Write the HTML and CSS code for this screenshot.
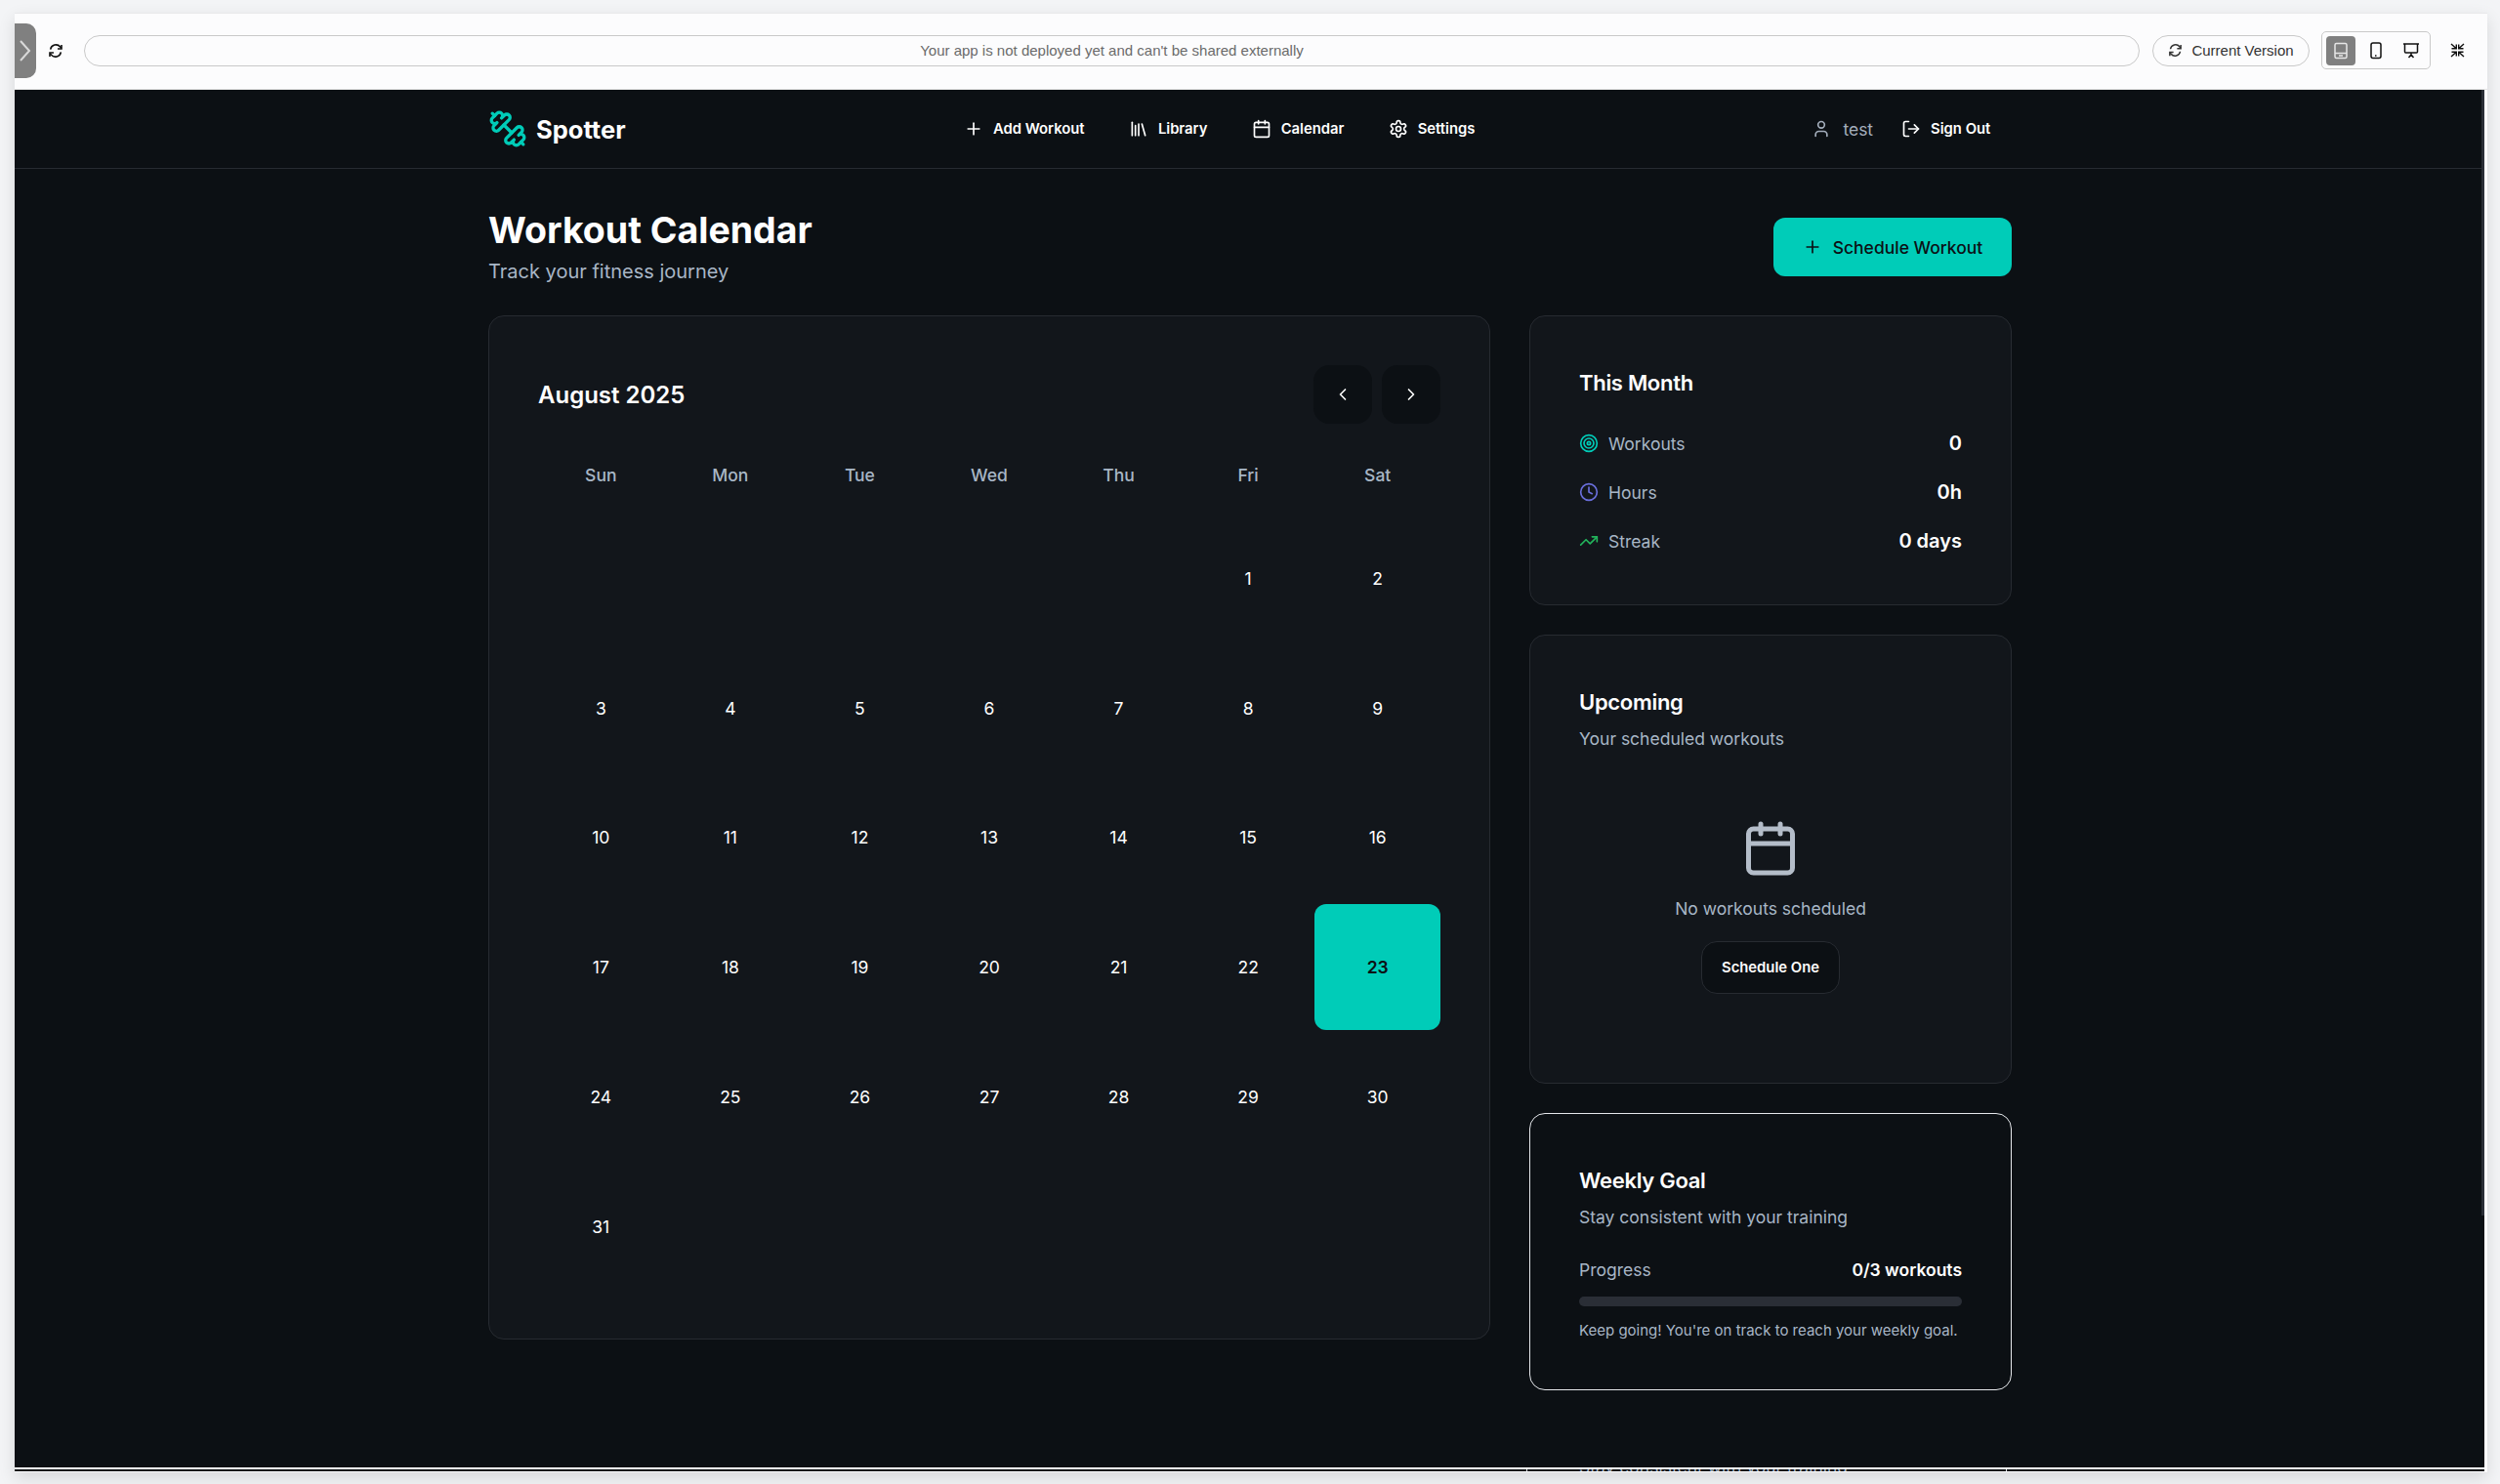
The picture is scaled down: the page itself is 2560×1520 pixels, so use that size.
FILE: index.html
```html
<!DOCTYPE html>
<html lang="en">
<head>
<meta charset="utf-8">
<title>Spotter</title>
<link rel="stylesheet" href="styles.css">
</head>
<body>
<div class="frame">
  <div class="toolbar">
    <div class="handle"><svg width="14" height="26" viewBox="0 0 14 26" fill="none" stroke="#d9d9d9" stroke-width="2"><path d="M2 3l9 10-9 10"/></svg></div>
    <svg class="refresh" width="16" height="18" viewBox="0 0 24 24" fill="none" stroke="#111" stroke-width="2.4"><path d="M4 10a8.500 8.500 0 0 1 15-4l1.500 2"/><path d="M21 3v6h-6"/><path d="M20 14a8.500 8.500 0 0 1-15 4l-1.500-2"/><path d="M3 21v-6h6"/></svg>
    <div class="url">Your app is not deployed yet and can't be shared externally</div>
    <div class="version"><svg width="15" height="15" viewBox="0 0 24 24" fill="none" stroke="#333" stroke-width="2.400"><path d="M4 10a8.500 8.500 0 0 1 15-4l1.500 2"/><path d="M21 3v6h-6"/><path d="M20 14a8.500 8.500 0 0 1-15 4l-1.500-2"/><path d="M3 21v-6h6"/></svg><span>Current Version</span></div>
    <div class="devices">
      <div class="device active"><svg width="18" height="18" viewBox="0 0 18 18" fill="none" stroke="#e6e6e6" stroke-width="1.500"><rect x="3" y="1.500" width="12" height="15" rx="1.500"/><path d="M3 11.500h12M7 14h4"/></svg></div>
      <div class="device"><svg width="16" height="18" viewBox="0 0 16 18" fill="none" stroke="#111" stroke-width="1.500"><rect x="3" y="1" width="10" height="15.500" rx="2"/><path d="M7 14h1.500"/></svg></div>
      <div class="device"><svg width="18" height="18" viewBox="0 0 18 18" fill="none" stroke="#111" stroke-width="1.500"><path d="M1 2h16M2.500 2v8a1 1 0 0 0 1 1h11a1 1 0 0 0 1-1V2M9 11v2M6.500 16L9 13l2.500 3"/></svg></div>
    </div>
    <svg class="shrink" width="15" height="15" viewBox="0 0 15 15" fill="none" stroke="#111" stroke-width="1.400"><path d="M1 1l5 4.500M1.500 5.800h4.800V1.500M14 1L9 5.500M13.500 5.800H8.700V1.500M1 14l5-4.500M1.500 9.200h4.800v4.300M14 14L9 9.500M13.500 9.200H8.700v4.300"/></svg>
  </div>
  <div class="app">
    <div class="scroll-thumb"></div>
    <header class="topbar">
      <div class="topbar-inner">
        <div class="brand">
          <svg class="logo" width="40" height="40" viewBox="0 0 24 24" fill="none" stroke="#00ccb8" stroke-width="2" stroke-linecap="round" stroke-linejoin="round"><path d="M14.400 14.400 9.600 9.600"/><path d="M18.657 21.485a2 2 0 1 1-2.829-2.828l-1.767 1.768a2 2 0 1 1-2.829-2.829l6.364-6.364a2 2 0 1 1 2.829 2.829l-1.768 1.767a2 2 0 1 1 2.828 2.829z"/><path d="m21.500 21.500-1.400-1.400"/><path d="M3.900 3.900 2.500 2.500"/><path d="M6.404 12.768a2 2 0 1 1-2.829-2.829l1.768-1.767a2 2 0 1 1-2.828-2.829l2.828-2.828a2 2 0 1 1 2.829 2.828l1.767-1.768a2 2 0 1 1 2.829 2.829z"/></svg>
          <span>Spotter</span>
        </div>
        <nav class="nav">
          <a class="nav-item"><svg class="i" viewBox="0 0 24 24"><path d="M5 12h14"/><path d="M12 5v14"/></svg>Add Workout</a>
          <a class="nav-item"><svg class="i" viewBox="0 0 24 24"><path d="m16 6 4 14"/><path d="M12 6v14"/><path d="M8 8v12"/><path d="M4 4v16"/></svg>Library</a>
          <a class="nav-item"><svg class="i" viewBox="0 0 24 24"><path d="M8 2v4"/><path d="M16 2v4"/><rect x="3" y="4" width="18" height="18" rx="2"/><path d="M3 10h18"/></svg>Calendar</a>
          <a class="nav-item"><svg class="i" viewBox="0 0 24 24"><path d="M12.220 2h-.44a2 2 0 0 0-2 2v.18a2 2 0 0 1-1 1.730l-.43.25a2 2 0 0 1-2 0l-.15-.08a2 2 0 0 0-2.730.73l-.22.38a2 2 0 0 0 .73 2.730l.15.1a2 2 0 0 1 1 1.720v.51a2 2 0 0 1-1 1.740l-.15.09a2 2 0 0 0-.73 2.730l.22.38a2 2 0 0 0 2.730.73l.15-.08a2 2 0 0 1 2 0l.43.25a2 2 0 0 1 1 1.730V20a2 2 0 0 0 2 2h.44a2 2 0 0 0 2-2v-.18a2 2 0 0 1 1-1.730l.43-.25a2 2 0 0 1 2 0l.15.08a2 2 0 0 0 2.730-.73l.22-.39a2 2 0 0 0-.73-2.730l-.15-.08a2 2 0 0 1-1-1.740v-.5a2 2 0 0 1 1-1.740l.15-.09a2 2 0 0 0 .73-2.730l-.22-.38a2 2 0 0 0-2.730-.73l-.15.08a2 2 0 0 1-2 0l-.43-.25a2 2 0 0 1-1-1.730V4a2 2 0 0 0-2-2z"/><circle cx="12" cy="12" r="3"/></svg>Settings</a>
        </nav>
        <div class="account">
          <span class="user"><svg class="i" viewBox="0 0 24 24"><path d="M19 21v-2a4 4 0 0 0-4-4H9a4 4 0 0 0-4 4v2"/><circle cx="12" cy="7" r="4"/></svg>test</span>
          <a class="nav-item"><svg class="i" viewBox="0 0 24 24"><path d="M9 21H5a2 2 0 0 1-2-2V5a2 2 0 0 1 2-2h4"/><path d="m16 17 5-5-5-5"/><path d="M21 12H9"/></svg>Sign Out</a>
        </div>
      </div>
    </header>
    <main class="page">
      <div class="page-head">
        <div>
          <h1>Workout Calendar</h1>
          <p class="lead">Track your fitness journey</p>
        </div>
        <button class="primary"><svg class="i" viewBox="0 0 24 24"><path d="M5 12h14"/><path d="M12 5v14"/></svg>Schedule Workout</button>
      </div>
      <div class="columns">
        <section class="card calendar">
          <div class="cal-head">
            <h2>August 2025</h2>
            <div class="cal-nav">
              <button class="cal-btn"><svg class="i" viewBox="0 0 24 24"><path d="m15 18-6-6 6-6"/></svg></button>
              <button class="cal-btn"><svg class="i" viewBox="0 0 24 24"><path d="m9 18 6-6-6-6"/></svg></button>
            </div>
          </div>
          <div class="weekdays"><span>Sun</span><span>Mon</span><span>Tue</span><span>Wed</span><span>Thu</span><span>Fri</span><span>Sat</span></div>
          <div class="days">
            <span class="day"></span><span class="day"></span><span class="day"></span><span class="day"></span><span class="day"></span>
            <span class="day">1</span><span class="day">2</span>
            <span class="day">3</span><span class="day">4</span><span class="day">5</span><span class="day">6</span><span class="day">7</span><span class="day">8</span><span class="day">9</span>
            <span class="day">10</span><span class="day">11</span><span class="day">12</span><span class="day">13</span><span class="day">14</span><span class="day">15</span><span class="day">16</span>
            <span class="day">17</span><span class="day">18</span><span class="day">19</span><span class="day">20</span><span class="day">21</span><span class="day">22</span><span class="day today">23</span>
            <span class="day">24</span><span class="day">25</span><span class="day">26</span><span class="day">27</span><span class="day">28</span><span class="day">29</span><span class="day">30</span>
            <span class="day">31</span>
          </div>
        </section>
        <aside class="side">
          <section class="card month">
            <h3>This Month</h3>
            <div class="stats">
              <div class="stat"><span class="stat-label"><svg class="i teal" viewBox="0 0 24 24"><circle cx="12" cy="12" r="10"/><circle cx="12" cy="12" r="6"/><circle cx="12" cy="12" r="2"/></svg>Workouts</span><b>0</b></div>
              <div class="stat"><span class="stat-label"><svg class="i indigo" viewBox="0 0 24 24"><circle cx="12" cy="12" r="10"/><polyline points="12 6 12 12 16 14"/></svg>Hours</span><b>0h</b></div>
              <div class="stat"><span class="stat-label"><svg class="i green" viewBox="0 0 24 24"><polyline points="22 7 13.500 15.500 8.500 10.500 2 17"/><polyline points="16 7 22 7 22 13"/></svg>Streak</span><b>0 days</b></div>
            </div>
          </section>
          <section class="card upcoming">
            <h3>Upcoming</h3>
            <p class="sub">Your scheduled workouts</p>
            <div class="empty">
              <svg class="empty-icon" viewBox="0 0 24 24"><path d="M8 2v4"/><path d="M16 2v4"/><rect x="3" y="4" width="18" height="18" rx="2"/><path d="M3 10h18"/></svg>
              <p>No workouts scheduled</p>
              <button class="ghost">Schedule One</button>
            </div>
          </section>
          <section class="card goal">
            <h3>Weekly Goal</h3>
            <p class="sub">Stay consistent with your training</p>
            <div class="progress-row"><span>Progress</span><b>0/3 workouts</b></div>
            <div class="bar"></div>
            <p class="note">Keep going! You're on track to reach your weekly goal.</p>
          </section>
        </aside>
      </div>
    </main>
  </div>
  <div class="clip-strip"><span class="clip-box"><span class="clip-text">Stay consistent with your training</span></span></div>
</div>
</body>
</html>
```
FILE: styles.css
```css
* { box-sizing: border-box; }
html, body { margin: 0; height: 100%; }
body { background: #f3f4f6; font-family: Inter, "Noto Sans", sans-serif; overflow: hidden; }
h1, h2, h3, p { margin: 0; }
button { font-family: inherit; cursor: pointer; }

.frame { margin: 13px 13px 0 15px; height: 1495px; position: relative; background: #fcfcfd; box-shadow: 0 6px 16px rgba(0,0,0,.12); border-top: 1px solid #e8e8ea; }

.toolbar { height: 78px; display: flex; align-items: center; background: #fcfcfd; border-bottom: 1px solid #e5e5e5; padding-right: 23px; }
.handle { width: 22px; height: 56px; background: #808080; border-radius: 0 10px 10px 0; display: flex; align-items: center; justify-content: center; margin-top: -2px; }
.refresh { margin-left: 12px; margin-top: -2px; }
.url { margin-left: 21px; flex: 1; height: 32px; margin-top: -2px; border: 1px solid #c9c9c9; border-radius: 16px; display: flex; align-items: center; justify-content: center; font: 15px "Liberation Sans", Arial, sans-serif; color: #6b6b6b; }
.version { margin-left: 13px; width: 161px; height: 32px; margin-top: -2px; border: 1px solid #c9c9c9; border-radius: 16px; display: flex; align-items: center; justify-content: center; gap: 9px; font: 15px "Liberation Sans", Arial, sans-serif; color: #333; }
.devices { margin-left: 12px; width: 112px; height: 39px; margin-top: -2px; border: 1px solid #c9c9c9; border-radius: 5px; display: flex; align-items: center; padding-left: 4px; gap: 6px; }
.device { width: 30px; height: 30px; border-radius: 4px; display: flex; align-items: center; justify-content: center; }
.device.active { background: #808080; }
.shrink { margin-left: 20px; margin-top: -2px; }

.app { position: relative; height: 1411px; background: #0c1014; color: #fff; margin-right: 3px; overflow: hidden; }
.scroll-thumb { position: absolute; right: 0; top: 0; width: 3px; height: 1153px; background: #2a2e36; }

.topbar { height: 81px; border-bottom: 1px solid #272b31; margin-right: 3px; padding-left: 485px; }
.topbar-inner { display: flex; align-items: center; height: 100%; width: 1560px; }
.brand { display: flex; align-items: center; gap: 9px; width: 487px; font-size: 25.500px; font-weight: 700; color: #fff; flex: none; }
.nav { display: flex; align-items: center; gap: 45.300px; }
.nav-item { display: flex; align-items: center; gap: 10px; font-size: 14.800px; font-weight: 600; color: #fff; white-space: nowrap; }
.i { width: 20px; height: 20px; fill: none; stroke: currentColor; stroke-width: 2; stroke-linecap: round; stroke-linejoin: round; flex: none; }
.account { display: flex; align-items: center; margin-left: 345px; gap: 29px; }
.user { display: flex; align-items: center; gap: 12px; font-size: 17.500px; color: #a3adbb; }

.page { width: 1560px; margin-left: 485px; }
.page-head { display: flex; justify-content: space-between; height: 150px; padding-top: 40px; }
h1 { font-size: 37.500px; line-height: 46px; font-weight: 700; }
.lead { font-size: 20px; line-height: 28px; color: #a8b6c6; margin-top: 5px; }
.primary { margin-top: 10px; width: 244px; height: 60px; border: 0; border-radius: 12px; background: #00ccb8; color: #0c1014; font-size: 17.500px; font-weight: 500; display: flex; align-items: center; justify-content: center; gap: 11px; }

.columns { display: flex; align-items: flex-start; gap: 40px; }
.card { background: #12161b; border: 1px solid #272b31; border-radius: 16px; }
.calendar { width: 1026px; height: 1049px; padding: 50px; }
.cal-head { display: flex; justify-content: space-between; align-items: center; height: 60px; }
h2 { font-size: 24px; font-weight: 600; }
.cal-nav { display: flex; gap: 10px; }
.cal-btn { width: 60px; height: 60px; border: 0; border-radius: 16px; background: #0c1014; color: #fff; display: flex; align-items: center; justify-content: center; }
.weekdays { display: grid; grid-template-columns: repeat(7, 1fr); gap: 4px; margin-top: 43px; font-size: 17.500px; font-weight: 500; color: #a8b6c6; text-align: center; line-height: 20px; }
.days { display: grid; grid-template-columns: repeat(7, 1fr); grid-auto-rows: 128.750px; gap: 4px; margin-top: 31px; }
.day { display: flex; align-items: center; justify-content: center; font-size: 17.500px; font-weight: 400; border-radius: 12px; color: #fff; }
.day.today { background: #00ccb8; color: #0c1014; font-weight: 600; }

.side { width: 494px; display: flex; flex-direction: column; gap: 30px; }
.month { height: 297px; padding: 50px; }
h3 { font-size: 22px; line-height: 36px; font-weight: 600; letter-spacing: -.3px; }
.stats { display: flex; flex-direction: column; gap: 26px; margin-top: 32px; }
.stat { display: flex; justify-content: space-between; align-items: center; height: 24px; font-size: 17.500px; }
.stat b { font-size: 20px; font-weight: 600; }
.stat-label { display: flex; align-items: center; gap: 10px; color: #a8b6c6; }
.teal { color: #00ccb8; }
.indigo { color: #6a6fdc; }
.green { color: #22b45c; }

.upcoming { height: 460px; padding: 50px; }
.sub { font-size: 17.500px; line-height: 24px; color: #a8b6c6; margin-top: 8px; }
.empty { display: flex; flex-direction: column; align-items: center; margin-top: 70px; }
.empty-icon { width: 60px; height: 60px; fill: none; stroke: #b4bdc9; stroke-width: 2; stroke-linecap: round; stroke-linejoin: round; }
.empty p { font-size: 17.500px; line-height: 24px; color: #a8b6c6; margin-top: 20px; }
.ghost { margin-top: 21px; width: 142px; height: 54px; background: #0c1014; border: 1px solid #272b31; border-radius: 16px; color: #fff; font-size: 14.800px; font-weight: 600; }

.goal { height: 284px; padding: 50px; background: #0c1014; border-color: #e5e7eb; }
.progress-row { display: flex; justify-content: space-between; font-size: 17.500px; line-height: 24px; margin-top: 30px; color: #a8b6c6; }
.progress-row b { color: #fff; font-weight: 600; }
.bar { height: 10px; background: #2a2e36; border-radius: 5px; margin-top: 15px; }
.note { font-size: 15px; line-height: 20px; color: #a8b6c6; margin-top: 15px; }

.clip-strip { position: absolute; left: 0; right: 3px; top: 1489px; height: 4px; background: #0c1014; border-top: 2px solid #fff; overflow: hidden; }
.clip-box { position: absolute; left: 1548px; width: 492px; top: 0; bottom: 0; border-left: 1px solid #e5e7eb; border-right: 1px solid #e5e7eb; }
.clip-text { position: absolute; left: 53px; top: -14px; white-space: nowrap; color: #a8b6c6; font-size: 17.500px; line-height: 24px; }
```
